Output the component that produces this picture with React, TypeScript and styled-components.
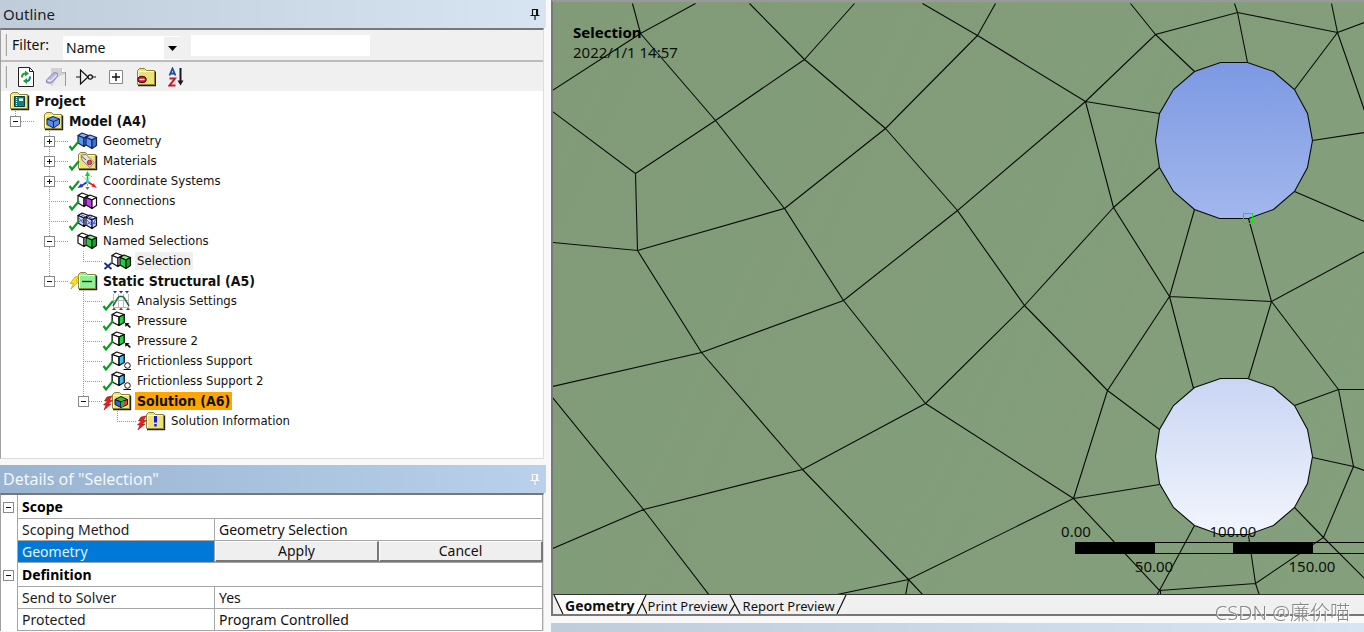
import React from 'react';
import styled, { createGlobalStyle } from 'styled-components';

const UI = '"Noto Sans", "Noto Sans CJK SC", sans-serif';
const TREE = '"DejaVu Sans Condensed", "DejaVu Sans", sans-serif';

const GlobalStyle = createGlobalStyle`
  * { box-sizing: border-box; }
  body { margin: 0; background: #f8f8f8; color: #111; font: 14px/20px ${UI}; }
  button, input, select { font: inherit; color: inherit; }
  ul { list-style: none; margin: 0; padding: 0; }
  svg { display: block; }
`;

const Page = styled.main`
  display: flex;
  gap: 5px;
  height: 100vh;
  overflow: hidden;
`;

const Sidebar = styled.div`
  display: flex;
  flex: none;
  flex-direction: column;
  width: 546px;
`;

const TitleBar = styled.header<{ $active?: boolean }>`
  display: flex;
  flex: none;
  align-items: center;
  justify-content: space-between;
  height: 28px;
  padding: 0 5px 0 3px;
  color: ${p => (p.$active ? '#f2f6fb' : '#1c1c28')};
  background: ${p =>
    p.$active
      ? 'linear-gradient(90deg, #99b4d1, #b9d1ea)'
      : 'linear-gradient(90deg, #bfcddb, #d7e4f2)'};
`;

const Title = styled.h2<{ $large?: boolean }>`
  margin: 0;
  font-size: ${p => (p.$large ? 16 : 15)}px;
  font-weight: 400;
  line-height: 28px;
`;

const PinButton = styled.button`
  padding: 0;
  border: 0;
  background: none;
`;

const PanelBody = styled.section`
  display: flex;
  flex-direction: column;
  margin-right: 2px;
  border-top: 2px solid #777;
  border-right: 1px solid #ddd;
  border-left: 1px solid #a0a0a0;
`;

const OutlineBody = styled(PanelBody)`
  height: 431px;
  border-bottom: 1px solid #ddd;
  background: #fff;
`;

const Toolbar = styled.div`
  display: flex;
  flex: none;
  align-items: center;
  height: 29px;
  padding-left: 4px;
  background: #f0f0f0;
`;

const FilterBar = styled(Toolbar)`
  height: 32px;
  border-bottom: 2px solid #bcbcbc;
`;

const Grip = styled.span`
  width: 2px;
  height: 22px;
  border-right: 1px solid #a6a6a6;
  background: #e2e2e2;
`;

const FilterLabel = styled.label`
  width: 56px;
  padding-left: 5px;
`;

const SelectWrap = styled.span`
  display: flex;
  align-items: center;
  align-self: flex-end;
  width: 118px;
  height: 24px;
  background: #fff;
`;

const FilterSelect = styled.select`
  appearance: none;
  flex: 1;
  min-width: 0;
  height: 24px;
  margin-right: -18px;
  padding: 0 20px 0 3px;
  border: 0;
  background: transparent;
`;

const SelectArrow = styled.span`
  display: grid;
  place-items: center;
  width: 17px;
  height: 22px;
  background: #f0f0f0;
  pointer-events: none;
`;

const FilterInput = styled.input`
  width: 179px;
  height: 21px;
  margin-left: 10px;
  border: 0;
  background: #fff;
`;

const ToolButton = styled.button`
  display: grid;
  place-items: center;
  width: 30px;
  height: 24px;
  padding: 0;
  border: 0;
  background: none;
`;

const ToolGroup = styled.div`
  display: flex;
  padding-left: 4px;
`;

/* ---------- tree ---------- */

const Tree = styled.ul`
  padding-bottom: 4px;
`;

const Row = styled.div`
  display: flex;
  align-items: center;
  height: 20px;
  font: 13px/18px ${TREE};
`;

const vDots = 'repeating-linear-gradient(180deg, #999 0 1px, transparent 1px 2px)';
const hDots = 'repeating-linear-gradient(90deg, #999 0 1px, transparent 1px 2px)';

type GuideKind = 'blank' | 'through' | 'tee' | 'corner';

const guideBackground: Record<GuideKind, string> = {
  blank: 'none',
  through: `${vDots} 14px 0 / 1px 20px no-repeat`,
  tee: `${vDots} 14px 0 / 1px 20px no-repeat, ${hDots} 14px 10px / 20px 1px no-repeat`,
  corner: `${vDots} 14px 0 / 1px 10px no-repeat, ${hDots} 14px 10px / 20px 1px no-repeat`,
};

const Guide = styled.span<{ $kind: GuideKind }>`
  display: flex;
  flex: none;
  align-items: center;
  width: 34px;
  height: 20px;
  padding-left: 9px;
  background: ${p => guideBackground[p.$kind]};
`;

const Expander = styled.button`
  width: 11px;
  height: 11px;
  padding: 0;
  border: 1px solid #8a8a8a;
  background: #fff;
  svg { width: 9px; height: 9px; }
`;

const MarkSlot = styled.span`
  z-index: 1;
  flex: none;
  width: 8px;
  height: 20px;
  svg { overflow: visible; }
`;

const IconSlot = styled.span`
  flex: none;
  width: 20px;
  height: 20px;
  svg { overflow: visible; }
`;

const NodeLabel = styled.span<{ $bold?: boolean; $tone?: 'picked' | 'warn' }>`
  margin-left: 4px;
  padding: 0 2px;
  white-space: nowrap;
  font-size: ${p => (p.$bold ? 14 : 13)}px;
  font-weight: ${p => (p.$bold ? 700 : 400)};
  background: ${p => (p.$tone === 'picked' ? '#f0f0f0' : p.$tone === 'warn' ? '#ffa500' : 'none')};
`;

type Mark = 'check' | 'cross' | 'bolt' | 'redbolt';

interface TreeNode {
  label: string;
  icon: keyof typeof nodeIcons;
  mark?: Mark;
  bold?: boolean;
  tone?: 'picked' | 'warn';
  collapsed?: boolean;
  children?: TreeNode[];
}

const Folder = ({ fill = '#ece27c', children }: { fill?: string; children?: React.ReactNode }) => (
  <svg width="20" height="20" viewBox="0 0 20 20">
    <path d="M2 18.500H19.500V4.500" fill="none" stroke="#222" strokeWidth="1.400" />
    <path d="M1.500 17.500V3.500L3.500 1.500H8.500L10.500 3.500H18.500V17.500Z" fill={fill} stroke="#8c8434" />
    <path d="M2.500 16.500V4.500H17.500" fill="none" stroke="#fffde0" />
    {children}
  </svg>
);

const Cube = ({ x = 0, y = 0, wide = false, top = '#fff', left = '#fff', right = '#fff', stroke = '#111' }) => (
  <g
    transform={`translate(${x} ${y})${wide ? ' scale(1.150 1)' : ''}`}
    stroke={stroke}
    strokeWidth="1.200"
    strokeLinejoin="round"
  >
    <path d="M1 3.500L5 1L11.500 3.500L7 6Z" fill={top} />
    <path d="M1 3.500L7 6V14.500L1 11Z" fill={left} />
    <path d="M7 6L11.500 3.500V11.500L7 14.500Z" fill={right} />
  </g>
);

const Pair = ({ a, b, stroke, children }: { a: string[]; b: string[]; stroke?: string; children?: React.ReactNode }) => (
  <svg width="20" height="20" viewBox="0 0 20 20">
    <Cube x={0} y={1} top={a[0]} left={a[1]} right={a[2]} stroke={stroke} />
    <Cube x={8} y={3} top={b[0]} left={b[1]} right={b[2]} stroke={stroke} />
    {children}
  </svg>
);

const LoadCube = ({ face, children }: { face: string; children: React.ReactNode }) => (
  <svg width="20" height="20" viewBox="0 0 20 20">
    <Cube x={0} y={0} right={face} wide />
    {children}
  </svg>
);

const pressure = (
  <LoadCube face="#19d83a">
    <path d="M14 12H18.500L17.200 13.200L20 15.900L18.700 17L16 14.400L14.500 16Z" fill="#111" />
  </LoadCube>
);

const frictionless = (
  <LoadCube face="#36c5f0">
    <circle cx="16.500" cy="14.500" r="2.800" fill="#fff" stroke="#111" />
    <path d="M12.500 18.500H20" stroke="#111" />
  </LoadCube>
);

const nodeIcons = {
  project: (
    <Folder>
      <path d="M5.500 5.500H15.500V15.500H5.500Z" fill="#0f7f7f" stroke="#063f45" />
      <path d="M7.500 6V15" stroke="#e8f4c8" strokeDasharray="1 1" />
      <path d="M10 7.500H14V10H10Z" fill="#fff" />
    </Folder>
  ),
  model: (
    <Folder>
      <path d="M4 8L10 5.500L16.500 8V13L10.500 17L4 13.500Z" fill="#5b8be8" stroke="#12245e" />
      <path d="M4 8L10.500 10.500L16.500 8M10.500 10.500V16.500" fill="none" stroke="#12245e" />
    </Folder>
  ),
  geometry: <Pair a={['#8db4ff', '#5e93f5', '#4f83ea']} b={['#8db4ff', '#5e93f5', '#3f72d8']} stroke="#14275f" />,
  materials: (
    <Folder>
      <path d="M4 4L9 3.500L17 11.500L13 16.500L5 9Z" fill="#e9e1dc" stroke="#8d7d74" />
      <circle cx="12.500" cy="11.500" r="2.200" fill="#e64b50" stroke="#8d3033" />
      <path d="M5 5.500L9 9" stroke="#555" />
    </Folder>
  ),
  axes: (
    <svg width="20" height="20" viewBox="0 0 20 20">
      <path d="M5 5L15 13M15 5L7 12M10.500 10V18" stroke="#aaa" strokeDasharray="2 1" />
      <path d="M10.500 11V4" stroke="#16cf2c" strokeWidth="1.600" />
      <path d="M10.500 0L13 5H8Z" fill="#16cf2c" />
      <path d="M10.500 11L4 15" stroke="#1c2fe0" strokeWidth="1.600" />
      <path d="M0.500 17L4 12.500L6 16Z" fill="#1c2fe0" />
      <path d="M10.500 11L16 14" stroke="#ef2020" strokeWidth="1.600" />
      <path d="M20 17L14.500 15.500L16.500 12.300Z" fill="#ef2020" />
      <circle cx="10.500" cy="10.500" r="1.600" fill="#1fd6e6" />
      <path d="M8.500 16H12.500L10.500 19Z" fill="#666" />
    </svg>
  ),
  connections: <Pair a={['#fff', '#fff', '#c43bf0']} b={['#fff', '#c43bf0', '#fff']} />,
  mesh: (
    <Pair a={['#e4e8ff', '#cdd5ff', '#cdd5ff']} b={['#e4e8ff', '#dde2ff', '#cdd5ff']}>
      <path
        d="M1 6L7 13M1 11L7 8M3 3L9 6M9 8L15 15M9 14L15 10M15 11L19 13M15 15L19 8M10 5L16 8M15 5L11 8"
        stroke="#4a57d8"
        fill="none"
      />
    </Pair>
  ),
  named: <Pair a={['#fff', '#fff', '#fff']} b={['#7df08a', '#22cc3a', '#17a32c']} />,
  structural: (
    <Folder fill="#8fef95">
      <path d="M5 10.500H15" stroke="#0c4a12" strokeWidth="1.400" />
    </Folder>
  ),
  analysis: (
    <svg width="20" height="20" viewBox="0 0 20 20">
      <path d="M2.500 3V16.500H17.500V3M7.500 3V16M12.500 3V16M2.500 9.500H17.500" stroke="#bdbdbd" fill="none" />
      <path d="M2 15L7 6.500Q8 5.500 9 5.500H11Q12 5.500 13 6.500L18 15" stroke="#1b6a46" strokeWidth="1.500" fill="none" />
      <path d="M2 0H6L4 2.500ZM8 0H12L10 2.500ZM14 0H18L16 2.500Z" fill="#1531c4" />
      <path d="M1 19H5L3 16.500ZM8 19H12L10 16.500ZM15 19H19L17 16.500Z" fill="#c01818" />
    </svg>
  ),
  pressure,
  frictionless,
  solution: (
    <Folder>
      <path d="M4 8.500L10 5.500L16.500 8.500L10 11Z" fill="#2bc23a" stroke="#111" />
      <path d="M4 8.500L10 11V16.500L4 13.500Z" fill="#2a62e0" stroke="#111" />
      <path d="M16.500 8.500L10 11V16.500L16.500 13.500Z" fill="#e8412a" stroke="#111" />
      <path d="M10 11L13 10V15L10 16.500Z" fill="#26b53a" />
    </Folder>
  ),
  info: (
    <Folder>
      <path d="M10.500 5V11.500" stroke="#1717d8" strokeWidth="3" />
      <path d="M10.500 13V15.500" stroke="#1717d8" strokeWidth="2.400" />
    </Folder>
  ),
};

const markIcons: Record<Mark, React.ReactNode> = {
  check: <path d="M0.500 15L3 18.500L10 10" fill="none" stroke="#0e9a1e" strokeWidth="2.200" />,
  cross: <path d="M1.500 12L8.500 18M8.500 12L1.500 18" fill="none" stroke="#17298f" strokeWidth="1.800" />,
  bolt: <path d="M6 6L10 5L7 10H10L2 18L4.500 12.500H1Z" fill="#ffe21f" stroke="#c99b00" strokeWidth="0.700" />,
  redbolt: <path d="M4 6L9 5L6.500 9.500H9.500L5 13H8L1 19L3 14H0.500L4.500 10H1.500Z" fill="#ee1c1c" stroke="#7e1a10" strokeWidth="0.600" />,
};

const outline: TreeNode = {
  label: 'Project',
  icon: 'project',
  bold: true,
  children: [
    {
      label: 'Model (A4)',
      icon: 'model',
      bold: true,
      children: [
        { label: 'Geometry', icon: 'geometry', mark: 'check', collapsed: true },
        { label: 'Materials', icon: 'materials', mark: 'check', collapsed: true },
        { label: 'Coordinate Systems', icon: 'axes', mark: 'check', collapsed: true },
        { label: 'Connections', icon: 'connections', mark: 'check' },
        { label: 'Mesh', icon: 'mesh', mark: 'check' },
        {
          label: 'Named Selections',
          icon: 'named',
          children: [{ label: 'Selection', icon: 'named', mark: 'cross', tone: 'picked' }],
        },
        {
          label: 'Static Structural (A5)',
          icon: 'structural',
          mark: 'bolt',
          bold: true,
          children: [
            { label: 'Analysis Settings', icon: 'analysis', mark: 'check' },
            { label: 'Pressure', icon: 'pressure', mark: 'check' },
            { label: 'Pressure 2', icon: 'pressure', mark: 'check' },
            { label: 'Frictionless Support', icon: 'frictionless', mark: 'check' },
            { label: 'Frictionless Support 2', icon: 'frictionless', mark: 'check' },
            {
              label: 'Solution (A6)',
              icon: 'solution',
              mark: 'redbolt',
              bold: true,
              tone: 'warn',
              children: [{ label: 'Solution Information', icon: 'info', mark: 'redbolt' }],
            },
          ],
        },
      ],
    },
  ],
};

const Sign = ({ plus }: { plus?: boolean }) => (
  <svg width="9" height="9" viewBox="0 0 9 9" stroke="#111">
    <path d={plus ? 'M2 4.500H7M4.500 2V7' : 'M2 4.500H7'} />
  </svg>
);

function Branch({ node, guides, last }: { node: TreeNode; guides: GuideKind[]; last?: boolean }) {
  const isRoot = last === undefined;
  const cells: GuideKind[] = isRoot ? [] : [...guides, last ? 'corner' : 'tee'];
  const childGuides: GuideKind[] = isRoot ? [] : [...guides, last ? 'blank' : 'through'];
  const expandable = !isRoot && (node.collapsed || !!node.children);
  return (
    <li role="treeitem" aria-expanded={expandable ? !node.collapsed : undefined}>
      <Row>
        {cells.map((kind, i) => (
          <Guide key={i} $kind={kind}>
            {expandable && i === cells.length - 1 && (
              <Expander aria-label={`Toggle ${node.label}`}>
                <Sign plus={node.collapsed} />
              </Expander>
            )}
          </Guide>
        ))}
        <MarkSlot>
          {node.mark && (
            <svg width="10" height="20" viewBox="0 0 10 20">
              {markIcons[node.mark]}
            </svg>
          )}
        </MarkSlot>
        <IconSlot>{nodeIcons[node.icon]}</IconSlot>
        <NodeLabel $bold={node.bold} $tone={node.tone}>
          {node.label}
        </NodeLabel>
      </Row>
      {node.children && (
        <ul role="group">
          {node.children.map((child, i) => (
            <Branch key={child.label} node={child} guides={childGuides} last={i === node.children!.length - 1} />
          ))}
        </ul>
      )}
    </li>
  );
}

/* ---------- details ---------- */

const DetailsPanel = styled.div`
  margin-top: 6px;
`;

const Grid = styled.table`
  width: 100%;
  border-collapse: separate;
  border-spacing: 0;
  table-layout: fixed;
  background: #fff;
  th, td {
    height: 22px;
    padding: 0 4px;
    border-bottom: 1px solid #a6a6a6;
    text-align: left;
    font-weight: 400;
    line-height: 20px;
    white-space: nowrap;
  }
`;

const ToggleCell = styled.td`
  && { padding: 0 2px; border-bottom: 0; border-right: 1px solid #a6a6a6; }
`;

const GroupName = styled.th`
  && { height: 24px; font-weight: 700; border-right: 1px solid #a6a6a6; color: #000; }
`;

const Name = styled.th<{ $active?: boolean }>`
  && {
    border-right: 1px solid #a6a6a6;
    color: ${p => (p.$active ? '#e8f3ff' : '#1c1c1c')};
    background: ${p => (p.$active ? '#0078d7' : '#fff')};
  }
`;

const Value = styled.td`
  && { border-right: 1px solid #a6a6a6; }
`;

const ActionCell = styled.td`
  && { padding: 0; }
`;

const Actions = styled.div`
  display: grid;
  grid-template-columns: 1fr 1fr;
`;

const ActionButton = styled.button`
  height: 21px;
  padding: 0;
  border: solid;
  border-width: 1px 2px 2px 1px;
  border-color: #fff #777 #777 #fff;
  background: #efefef;
  line-height: 18px;
`;

interface Property {
  name: string;
  value?: string;
}

const groups: { name: string; rows: Property[] }[] = [
  { name: 'Scope', rows: [{ name: 'Scoping Method', value: 'Geometry Selection' }, { name: 'Geometry' }] },
  {
    name: 'Definition',
    rows: [
      { name: 'Send to Solver', value: 'Yes' },
      { name: 'Protected', value: 'Program Controlled' },
    ],
  },
];

const Pin = ({ color }: { color: string }) => (
  <svg width="12" height="14" viewBox="0 0 12 14" fill="none" stroke={color}>
    <path d="M3.500 8V2.500H8.500V8M1.500 8.500H10.500M6 9V13" strokeWidth="1.200" />
    <path d="M8 2V8" strokeWidth="2" />
  </svg>
);

/* ---------- viewer ---------- */

const Viewer = styled.div`
  display: flex;
  flex: 1;
  flex-direction: column;
  min-width: 0;
`;

const ViewFrame = styled.section`
  display: flex;
  flex: 1;
  flex-direction: column;
  min-height: 0;
  border: solid #777;
  border-width: 2px 0 2px 2px;
  border-top-color: #999;
`;

const Canvas = styled.div`
  position: relative;
  flex: 1;
  min-height: 0;
  overflow: hidden;
  background: linear-gradient(115deg, #819b79, #849f7c);
  border-bottom: 1px solid #333;
  > svg { width: 100%; height: 100%; }
`;

const Caption = styled.div`
  position: absolute;
  top: 20px;
  left: 20px;
  color: #0c100c;
  font-size: 15px;
  line-height: 20px;
`;

const CaptionTitle = styled.strong`
  display: block;
  color: #000;
`;

const Tabs = styled.div`
  display: flex;
  height: 19px;
  background: #f0f0f0;
`;

const Tab = styled.button<{ $active?: boolean }>`
  height: 19px;
  padding: 1px 1px 0;
  border: 0;
  background: ${p => (p.$active ? '#fff' : 'transparent')};
  font-size: ${p => (p.$active ? 14 : 13)}px;
  font-weight: ${p => (p.$active ? 700 : 400)};
  line-height: 20px;
`;

const NextTitle = styled.div`
  flex: none;
  height: 9px;
  margin-top: 7px;
  background: linear-gradient(90deg, #bfcddb, #d7e4f2);
`;

const Watermark = styled.div`
  position: fixed;
  right: 14px;
  bottom: 7px;
  color: #868686;
  font-size: 20px;
  font-weight: 300;
  line-height: 24px;
  text-shadow: 1px 1px 0 #fff;
  pointer-events: none;
`;

const meshEdges = [
  'M633 3L641 33L696 3M641 33L553 90M641 33L716 120',
  'M805 59L716 120L636 173M716 120L785 208M805 59L750 3M805 59L855 3M805 59L886 128',
  'M978 35L886 128L785 208M886 128L958 210M978 35L923 3M978 35L996 3M978 35L1086 101',
  'M553 111L636 173L638 250L553 242M638 250L785 208L844 300M638 250L702 352',
  'M958 210L844 300L702 352L553 386M844 300L926 403M702 352L803 469M553 397L644 509L553 548',
  'M644 509L803 469L926 403L1025 305L958 210L1086 101M644 509L710 595M803 469L909 579',
  'M926 403L1074 498L909 579L833 595M909 579L906 595M909 579L924 595',
  'M1025 305L1114 207M1025 305L1108 390',
  'M1086 101L1156 34L1238 12L1338 32M1086 101L1114 207L1170 296M1086 101L1160 113',
  'M1156 34L1131 3M1156 34L1195 71M1238 12L1235 3M1238 12L1248 62M1338 32L1332 3M1338 32L1365 22M1338 32L1365 110M1338 32L1295 89',
  'M1313 140L1365 132M1295 191L1365 221M1249 218L1272 301M1195 209L1170 296M1160 167L1114 207',
  'M1170 296L1272 301L1365 251M1170 296L1108 390L1074 498M1170 296L1194 388M1272 301L1249 378M1272 301L1339 389',
  'M1339 389H1365M1339 389L1295 405M1339 389L1354 466L1365 470M1354 466L1313 457M1354 466L1324 537L1256 583L1160 590L1074 498',
  'M1324 537L1295 507M1324 537L1365 578M1256 583L1249 535M1256 583L1260 595M1160 590L1195 525M1160 590L1157 595M1161 590V595',
  'M1108 390L1160 429M1074 498L1160 484',
].join('');

const hole =
  '1221,62 1248,62 1274,71 1295,89 1308,113 1313,140 1308,167 1295,191 1274,209 1249,218 1220,218 1195,209 1174,191 1160,167 1156,140 1160,113 1174,89 1195,71';

function MeshView() {
  return (
    <svg viewBox="553 2 811 593" preserveAspectRatio="xMinYMin slice" role="img" aria-label="Meshed plate">
      <defs>
        <linearGradient id="sky" x1="0" y1="0" x2="0" y2="1">
          <stop offset="0" stopColor="#7c99e2" />
          <stop offset="1" stopColor="#a2b7ec" />
        </linearGradient>
        <linearGradient id="haze" x1="0" y1="0" x2="0" y2="1">
          <stop offset="0" stopColor="#c9d5f3" />
          <stop offset="1" stopColor="#f2f5fd" />
        </linearGradient>
      </defs>
      <g transform="translate(-0.500 0.500)" stroke="#080c08" strokeWidth="1.100" fill="none">
        <path d={meshEdges} />
        <polygon points={hole} fill="url(#sky)" />
        <polygon points={hole} fill="url(#haze)" transform="translate(0 316)" />
        <path d="M1244 213H1253V223H1244Z" stroke="#00f000" />
      </g>
      <path d="M1075 542.500H1364M1075 553.500H1364" stroke="#000" />
      <path d="M1075 542H1155V554H1075ZM1233 542H1313V554H1233Z" fill="#000" />
      <g fontFamily={UI} fontSize="15" fill="#0c100c" textAnchor="middle">
        <text x="1076" y="537">0.00</text>
        <text x="1233" y="537">100.00</text>
        <text x="1154" y="572">50.00</text>
        <text x="1312" y="572">150.00</text>
      </g>
    </svg>
  );
}

const Slant = ({ fill, d, width }: { fill?: string; d: string; width: number }) => (
  <svg width={width} height="19" viewBox={`0 0 ${width} 19`}>
    {fill && <path d={fill} fill="#fff" />}
    <path d={d} fill="none" stroke="#111" strokeWidth="1.200" />
  </svg>
);

export default function App() {
  return (
    <>
      <GlobalStyle />
      <Page>
        <Sidebar>
          <TitleBar>
            <Title id="outline-title">Outline</Title>
            <PinButton aria-label="Pin outline">
              <Pin color="#111" />
            </PinButton>
          </TitleBar>
          <OutlineBody aria-labelledby="outline-title">
            <FilterBar>
              <Grip />
              <FilterLabel htmlFor="filter-by">Filter:</FilterLabel>
              <SelectWrap>
                <FilterSelect id="filter-by" defaultValue="Name">
                  <option>Name</option>
                </FilterSelect>
                <SelectArrow>
                  <svg width="9" height="5" viewBox="0 0 9 5">
                    <path d="M0 0H9L4.500 5Z" fill="#000" />
                  </svg>
                </SelectArrow>
              </SelectWrap>
              <FilterInput aria-label="Filter text" />
            </FilterBar>
            <Toolbar>
              <Grip />
              <ToolGroup>
                <ToolButton aria-label="Refresh">
                  <svg width="18" height="20" viewBox="0 0 18 20">
                    <path d="M1.500 0.500H12.500L16.500 4.500V19.500H1.500Z" fill="#fff" stroke="#222" />
                    <path d="M12.500 0.500V4.500H16.500" fill="none" stroke="#222" />
                    <path d="M5 10.500Q5 6.500 8.500 6.500" fill="none" stroke="#18a030" strokeWidth="2" />
                    <path d="M8 3.500L12 6.500L8 9.500Z" fill="#18a030" />
                    <path d="M13 9.500Q13 14 9.500 14" fill="none" stroke="#14808c" strokeWidth="2" />
                    <path d="M10 11L6 14L10 17Z" fill="#18a030" />
                  </svg>
                </ToolButton>
                <ToolButton aria-label="Clear">
                  <svg width="20" height="20" viewBox="0 0 20 20">
                    <path d="M5 1H15.500L19.500 5V19H5Z" fill="#d2d2d2" />
                    <path d="M6 19L11 10L19 7V19Z" fill="#ececec" />
                    <path d="M15.500 1V5H19.500V19" fill="none" stroke="#999" />
                    <path d="M15.500 1L19.500 5H15.500Z" fill="#fff" />
                    <path d="M0.500 13L7 6.500Q9.500 4.500 11.500 6.500V9.500L6 15.500Q3 17 0.500 15.500Z" fill="#b9bbe6" stroke="#8183b0" />
                    <path d="M1.500 13L4.500 14L11 7.500" fill="none" stroke="#fff" />
                  </svg>
                </ToolButton>
                <ToolButton aria-label="Invert">
                  <svg width="20" height="16" viewBox="0 0 20 16" fill="none" stroke="#111" strokeWidth="1.200">
                    <path d="M0 8H4.500M4.500 1V15L12 8ZM16.500 8H20" />
                    <circle cx="14.200" cy="8" r="2.200" />
                  </svg>
                </ToolButton>
                <ToolButton aria-label="Expand all">
                  <svg width="14" height="14" viewBox="0 0 14 14" fill="#fff">
                    <path d="M0.500 0.500H13.500V13.500H0.500Z" stroke="#888" />
                    <path d="M3 7H11M7 3V11" stroke="#111" strokeWidth="1.400" />
                  </svg>
                </ToolButton>
                <ToolButton aria-label="Hide folders">
                  <Folder>
                    <ellipse cx="6" cy="12.500" rx="4.200" ry="3.200" fill="#d01830" stroke="#3a0610" />
                    <path d="M3.500 12.500H8.500" stroke="#fff" strokeWidth="1.400" />
                  </Folder>
                </ToolButton>
                <ToolButton aria-label="Sort">
                  <svg width="16" height="20" viewBox="0 0 16 20" fill="none">
                    <path d="M1.500 8.500L4.500 1.500L7.500 8.500M2.500 6.500H6.500" stroke="#1b50a0" strokeWidth="1.800" />
                    <path d="M1.500 11.500H7L1.500 18.500H7.500" stroke="#c8182c" strokeWidth="2" />
                    <path d="M12.500 1V15" stroke="#181828" strokeWidth="2" />
                    <path d="M9.500 13.500H15.500L12.500 18.500Z" fill="#181828" />
                  </svg>
                </ToolButton>
              </ToolGroup>
            </Toolbar>
            <Tree role="tree" aria-label="Outline">
              <Branch node={outline} guides={[]} />
            </Tree>
          </OutlineBody>

          <DetailsPanel>
            <TitleBar $active>
              <Title id="details-title" $large>
                Details of "Selection"
              </Title>
              <PinButton aria-label="Pin details">
                <Pin color="#f4f8fd" />
              </PinButton>
            </TitleBar>
            <PanelBody aria-labelledby="details-title">
              <Grid>
                <colgroup>
                  <col width="17" />
                  <col width="197" />
                  <col />
                </colgroup>
                {groups.map(group => (
                  <tbody key={group.name}>
                    <tr>
                      <ToggleCell>
                        <Expander aria-label={`Collapse ${group.name}`}>
                          <Sign />
                        </Expander>
                      </ToggleCell>
                      <GroupName colSpan={2}>{group.name}</GroupName>
                    </tr>
                    {group.rows.map(row => (
                      <tr key={row.name}>
                        <ToggleCell />
                        <Name scope="row" $active={row.value === undefined}>
                          {row.name}
                        </Name>
                        {row.value === undefined ? (
                          <ActionCell>
                            <Actions>
                              <ActionButton>Apply</ActionButton>
                              <ActionButton>Cancel</ActionButton>
                            </Actions>
                          </ActionCell>
                        ) : (
                          <Value>{row.value}</Value>
                        )}
                      </tr>
                    ))}
                  </tbody>
                ))}
              </Grid>
            </PanelBody>
          </DetailsPanel>
        </Sidebar>

        <Viewer>
          <ViewFrame>
            <Canvas>
              <MeshView />
              <Caption>
                <CaptionTitle>Selection</CaptionTitle>
                2022/1/1 14:57
              </Caption>
            </Canvas>
            <Tabs role="tablist">
              <Slant width={11} fill="M0 0H11V19Z" d="M1 0L10 19" />
              <Tab role="tab" aria-selected $active>
                Geometry
              </Tab>
              <Slant width={11} fill="M0 0H10L1 19H0Z" d="M1 19L10 0M6 8L11 19" />
              <Tab role="tab">Print Preview</Tab>
              <Slant width={13} d="M1 0L11 19M0 19L6 9" />
              <Tab role="tab">Report Preview</Tab>
              <Slant width={11} d="M1 19L10 0" />
            </Tabs>
          </ViewFrame>
          <NextTitle />
        </Viewer>
      </Page>
      <Watermark>CSDN @廉价喵</Watermark>
    </>
  );
}
